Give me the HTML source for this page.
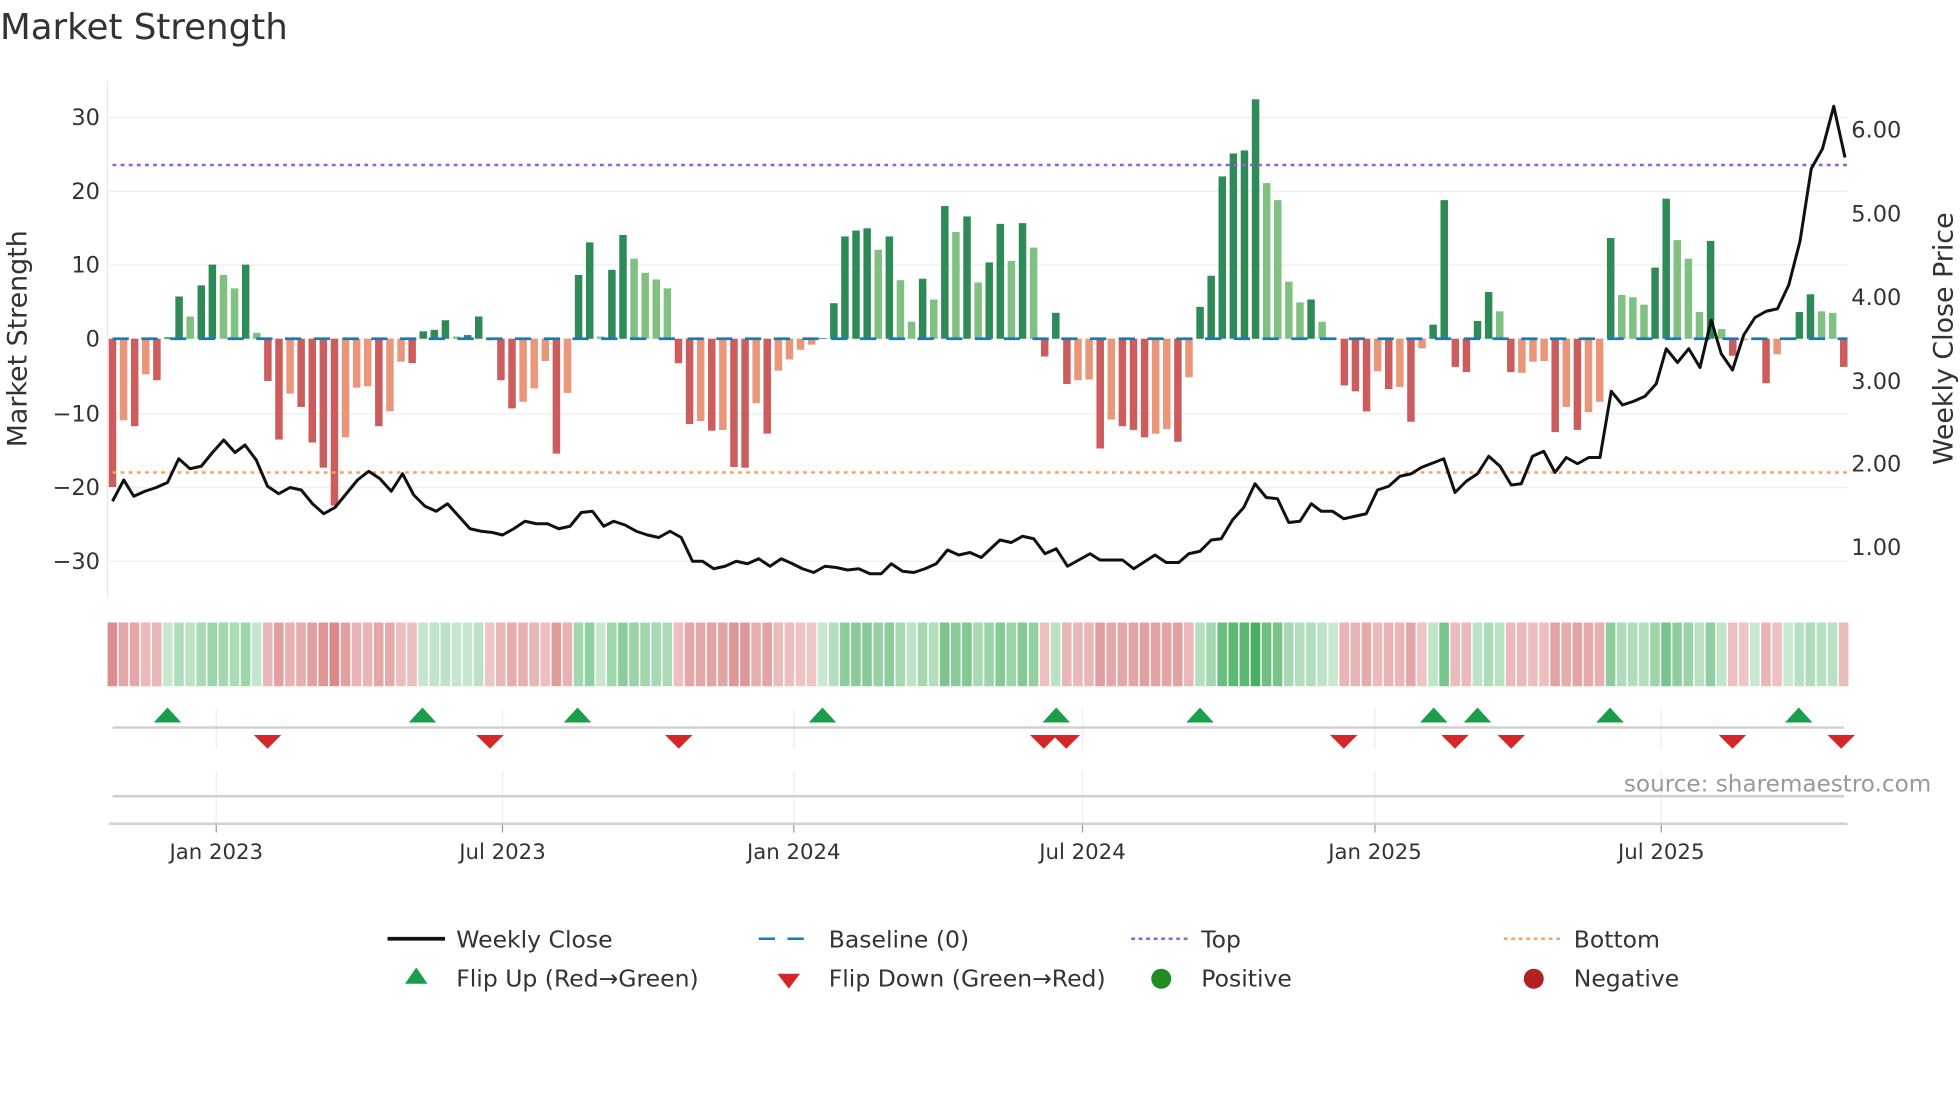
<!DOCTYPE html>
<html><head><meta charset="utf-8"><style>
html,body{margin:0;padding:0;background:#fff;}
svg{display:block;}
text{font-family:"DejaVu Sans","Liberation Sans",sans-serif;}
</style></head><body>
<svg id="s" width="1960" height="1102" viewBox="0 0 1568 881.6" xmlns="http://www.w3.org/2000/svg">
<rect width="1568" height="881.6" fill="#fff"/>
<g id="grid"></g>
<g id="bars"></g>
<g id="heat"></g>
<g id="marks"></g>
<text x="0" y="31" font-size="28.5" fill="#333">Market Strength</text>
<g font-size="18" fill="#333" text-anchor="end">
<text x="80" y="100">30</text><text x="80" y="159">20</text><text x="80" y="218">10</text><text x="80" y="277">0</text>
<text x="80" y="337">−10</text><text x="80" y="396">−20</text><text x="80" y="455">−30</text>
</g>
<g font-size="18" fill="#333">
<text x="1481" y="110">6.00</text><text x="1481" y="177">5.00</text><text x="1481" y="244">4.00</text>
<text x="1481" y="311">3.00</text><text x="1481" y="377">2.00</text><text x="1481" y="444">1.00</text>
</g>
<text transform="translate(21,271) rotate(-90)" font-size="21.5" fill="#333" text-anchor="middle">Market Strength</text>
<text transform="translate(1562,271) rotate(-90)" font-size="21.5" fill="#333" text-anchor="middle">Weekly Close Price</text>
<g font-size="17" fill="#333" text-anchor="middle">
<text x="173" y="687">Jan 2023</text><text x="402" y="687">Jul 2023</text><text x="635" y="687">Jan 2024</text>
<text x="866" y="687">Jul 2024</text><text x="1100" y="687">Jan 2025</text><text x="1329" y="687">Jul 2025</text>
</g>
<text x="1545" y="633" font-size="18.5" fill="#999" text-anchor="end">source: sharemaestro.com</text>
<g font-size="18.8" fill="#333">
<line x1="310" y1="751" x2="356" y2="751" stroke="#111" stroke-width="3"/>
<text x="365" y="758">Weekly Close</text>
<line x1="607" y1="751" x2="652" y2="751" stroke="#1f77b4" stroke-width="2" stroke-dasharray="13,10"/>
<text x="663" y="758">Baseline (0)</text>
<line x1="905" y1="751" x2="950" y2="751" stroke="#9b59d6" stroke-width="2" stroke-dasharray="3,3"/>
<text x="961" y="758">Top</text>
<line x1="1203" y1="751" x2="1248" y2="751" stroke="#f4a460" stroke-width="2" stroke-dasharray="3,3"/>
<text x="1259" y="758">Bottom</text>
<polygon points="333,774 342,787 324,787" fill="#1a9e4a"/>
<text x="365" y="789">Flip Up (Red→Green)</text>
<polygon points="622,779 640,779 631,791" fill="#d62728"/>
<text x="663" y="789">Flip Down (Green→Red)</text>
<circle cx="929" cy="783" r="8" fill="#228b22"/>
<text x="961" y="789">Positive</text>
<circle cx="1227" cy="783" r="8" fill="#b22222"/>
<text x="1259" y="789">Negative</text>
</g>
</svg>
<script>
var NS="http://www.w3.org/2000/svg";
function el(p,t,a){var e=document.createElementNS(NS,t);for(var k in a)e.setAttribute(k,a[k]);document.getElementById(p).appendChild(e);return e;}
var B="-20d,-11l,-11.8d,-4.8l,-5.6d,0.2d,5.7d,3l,7.2d,10d,8.6l,6.8l,10d,0.8l,-5.7d,-13.6d,-7.4l,-9.2d,-14d,-17.4d,-22.5d,-13.3l,-6.6l,-6.4l,-11.8d,-9.8l,-3.1l,-3.3d,1d,1.2d,2.5d,0.3l,0.5d,3d,-0.2d,-5.6d,-9.4d,-8.5l,-6.7l,-3l,-15.5d,-7.3l,8.6d,13d,0.3l,9.3d,14d,10.8l,8.9l,8l,6.8l,-3.3d,-11.5d,-11.1l,-12.4d,-12.3l,-17.3d,-17.4d,-8.7l,-12.8d,-4.3l,-2.8l,-1.5l,-0.8l,0.1d,4.8d,13.8d,14.6d,14.9d,12l,13.8d,7.9l,2.3l,8.1d,5.3l,17.9d,14.4l,16.5d,7.6l,10.3d,15.5d,10.5l,15.6d,12.3l,-2.4d,3.5d,-6.1d,-5.6l,-5.5l,-14.8d,-10.9l,-11.8d,-12.3d,-13.3d,-12.8l,-12.2l,-13.9d,-5.2l,4.3d,8.5d,21.9d,25d,25.4d,32.3d,21l,18.7l,7.7l,4.9l,5.3d,2.3l,0d,-6.3d,-7.1d,-9.8d,-4.4l,-6.8d,-6.5l,-11.2d,-1.3l,1.9d,18.7d,-3.8d,-4.5d,2.4d,6.3d,3.7l,-4.5d,-4.6l,-3.1l,-3l,-12.6d,-9.2l,-12.3d,-9.9l,-8.5l,13.6d,5.9l,5.6l,4.6l,9.6d,18.9d,13.3l,10.8l,3.6l,13.2d,1.3l,-2.3d,-0.2l,0d,-6d,-2.1l,0d,3.6d,6d,3.7l,3.5l,-3.8d".split(",");
var n=B.length, x0=90, dx=(1475-90)/(n-1), y0=271, k=5.93;
[94,153,212,271,331,390,449].forEach(function(y){el("grid","line",{x1:87,x2:1478,y1:y,y2:y,stroke:"#eef0f4","stroke-width":1.2});});
el("grid","line",{x1:86,x2:86,y1:65,y2:478,stroke:"#e8e8e8","stroke-width":1});
[173,402,635,866,1100,1329].forEach(function(x){
 el("grid","line",{x1:x,x2:x,y1:567,y2:599,stroke:"#eceef2","stroke-width":1});
 el("grid","line",{x1:x,x2:x,y1:617,y2:659,stroke:"#eceef2","stroke-width":1});
 el("grid","line",{x1:x,x2:x,y1:659,y2:666,stroke:"#999","stroke-width":1});
});
el("grid","line",{x1:90,x2:1475,y1:582,y2:582,stroke:"#d0d0d0","stroke-width":2});
el("grid","line",{x1:90,x2:1475,y1:637,y2:637,stroke:"#d0d0d0","stroke-width":2});
el("grid","line",{x1:87,x2:1478,y1:659,y2:659,stroke:"#d0d0d0","stroke-width":2});
for(var i=0;i<n;i++){
 var s=B[i],t=s.slice(-1),v=parseFloat(s),x=x0+i*dx;
 var col=v>=0?(t=="d"?"#2e8b57":"#80c080"):(t=="d"?"#cd5c5c":"#e9967a");
 var h=Math.abs(v)*k;
 el("bars","rect",{x:x-3,y:v>=0?y0-h:y0,width:6,height:Math.max(h,0.5),fill:col});
 var a=Math.min(Math.abs(v)/30,1);a=0.15+0.85*a;
 var c;
 if(v>=0){var r=Math.round(222-150*a),g=Math.round(242-68*a),b=Math.round(226-130*a);c="rgb("+r+","+g+","+b+")";}
 else{var r=Math.round(244-34*a),g=Math.round(214-100*a),b=Math.round(214-100*a);c="rgb("+r+","+g+","+b+")";}
 el("heat","rect",{x:x-dx/2+0.5,y:498,width:dx-1.2,height:51,fill:c});
}
el("bars","line",{x1:90,x2:1478,y1:271,y2:271,stroke:"#1f77b4","stroke-width":2.2,"stroke-dasharray":"13,10"});
el("bars","line",{x1:90,x2:1478,y1:132,y2:132,stroke:"#9b59d6","stroke-width":2,"stroke-dasharray":"3,3.5"});
el("bars","line",{x1:90,x2:1478,y1:378,y2:378,stroke:"#f4a460","stroke-width":2,"stroke-dasharray":"3,3.5"});
var P="90,401 99,384 107,397 116,393 125,390 134,386 143,367 152,375 161,373 170,362 179,352 188,362 196,356 205,368 214,389 223,395 232,390 241,392 250,403 259,411 268,406 277,395 286,384 295,377 304,383 313,393 322,379 331,396 340,405 349,409 358,403 367,413 376,423 385,425 394,426 402,428 411,423 420,417 429,419 438,419 447,423 456,421 465,410 474,409 483,421 491,417 500,420 509,425 518,428 527,430 536,425 545,430 554,449 562,449 571,455 580,453 589,449 598,451 607,447 616,453 625,447 634,451 642,455 651,458 660,453 669,454 678,456 687,455 696,459 705,459 713,451 722,457 731,458 740,455 749,451 758,440 767,444 776,442 785,446 800,432 809,434 818,429 827,431 836,443 845,439 854,453 872,443 880,448 898,448 907,455 924,444 933,450 943,450 951,443 960,441 969,432 977,431 986,416 995,406 1004,387 1013,398 1022,399 1031,418 1040,417 1049,403 1057,409 1066,409 1075,415 1093,411 1102,392 1111,389 1120,381 1129,379 1137,374 1155,367 1164,394 1173,385 1182,379 1191,365 1200,373 1209,388 1217,387 1226,365 1235,361 1244,378 1253,366 1262,371 1271,366 1280,366 1289,313 1298,324 1307,321 1316,317 1325,307 1333,279 1342,290 1351,279 1360,294 1369,256 1377,283 1386,296 1395,268 1404,254 1413,249 1422,247 1431,228 1440,193 1449,135 1458,119 1467,85 1476,126";
el("bars","polyline",{points:P,fill:"none",stroke:"#111","stroke-width":2.4,"stroke-linejoin":"round"});
[134,338,462,658,845,960,1147,1182,1288,1439].forEach(function(x){el("marks","polygon",{points:(x)+",566 "+(x+11)+",578 "+(x-11)+",578",fill:"#1a9e4a"});});
[214,392,543,835,853,1075,1164,1209,1386,1473].forEach(function(x){el("marks","polygon",{points:(x-11)+",588 "+(x+11)+",588 "+x+",599",fill:"#d62728"});});
</script>
</body></html>
